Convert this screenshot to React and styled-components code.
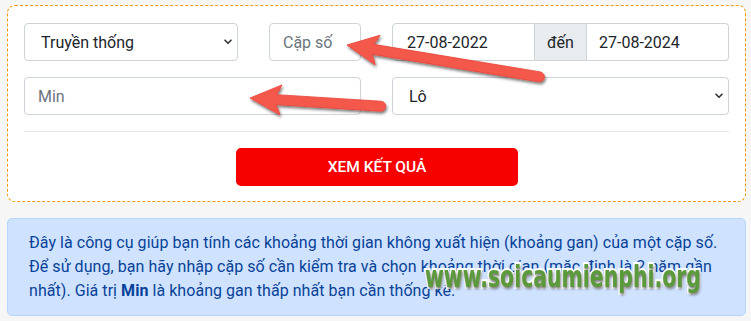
import React from "react";
import styled, { createGlobalStyle } from "styled-components";

const Global = createGlobalStyle`
  html, body { margin: 0; padding: 0; background: #f6f6f6; }
  body { font-family: Roboto, "Noto Sans", Arial, sans-serif; }
  * { box-sizing: border-box; }
`;

const Page = styled.div`
  position: relative;
  width: 751px;
  height: 321px;
  padding: 5px 5px 0 7px;
  overflow: hidden;
`;

const Card = styled.div`
  background: #fff;
  border: 1px dashed #f39800;
  border-radius: 8px;
  padding: 17px 16px 15px;
`;

const Row = styled.div`
  display: grid;
  grid-template-columns: ${(p) => p.$cols};
  column-gap: 31px;
  margin-bottom: ${(p) => p.$mb || 0}px;
`;

const fieldBase = `
  height: 38px;
  width: 100%;
  border: 1px solid #ced4da;
  background: #fff;
  font-family: Roboto, "Noto Sans", Arial, sans-serif;
  font-size: 16px;
  color: #212529;
  display: flex;
  align-items: center;
`;

const SelectBox = styled.div`
  ${fieldBase}
  position: relative;
  border-radius: 4px;
  padding: 0 16px;
`;

const Chevron = styled.svg`
  position: absolute;
  right: 5px;
  top: 15px;
  width: 8px;
  height: 6px;
`;

const Input = styled.div`
  ${fieldBase}
  border-radius: ${(p) => p.$radius || "4px"};
  padding: 0 ${(p) => p.$pad || 13}px;
  color: ${(p) => (p.$placeholder ? "#6c757d" : "#212529")};
  ${(p) => p.$noLeft && "border-left: none;"}
`;

const DateGroup = styled.div`
  display: grid;
  grid-template-columns: 143px 52px 1fr;
`;

const Addon = styled.div`
  height: 38px;
  background: #e9ecef;
  border: 1px solid #ced4da;
  border-left: none;
  display: flex;
  align-items: center;
  justify-content: center;
  font-size: 16px;
  color: #212529;
`;

const Divider = styled.div`
  height: 1px;
  background: #e4e4e4;
  margin: 16px 0 16px;
`;

const ButtonRow = styled.div`
  display: flex;
  justify-content: center;
`;

const Button = styled.button`
  width: 282px;
  height: 38px;
  background: #f70000;
  border: none;
  border-radius: 5px;
  color: #fff;
  font-family: Roboto, "Open Sans", Arial, sans-serif;
  font-weight: 500;
  font-size: 15.5px;
  margin-left: 1px;
`;

const Info = styled.div`
  position: relative;
  margin-top: 16px;
  background: #cfe2ff;
  border: 1px solid #b6d4fe;
  border-radius: 5px;
  padding: 12px 21px;
  color: #084298;
  font-size: 16px;
  line-height: 24px;
  letter-spacing: 0.05px;
`;

const Watermark = styled.span`
  position: absolute;
  left: 417px;
  top: 43px;
  font-family: "DejaVu Sans", Arial, sans-serif;
  font-weight: bold;
  font-stretch: condensed;
  font-size: 30px;
  line-height: 30px;
  letter-spacing: 0;
  color: #5a9a3a;
  -webkit-text-stroke: 4px #fff;
  paint-order: stroke fill;
  text-shadow: 1px 2px 3px rgba(0, 0, 0, 0.55);
  transform: scaleX(0.757);
  transform-origin: left top;
  white-space: nowrap;
  pointer-events: none;
`;

const Overlay = styled.svg`
  position: absolute;
  left: 0;
  top: 0;
  width: 751px;
  height: 321px;
  pointer-events: none;
`;

const Select = ({ children }) => (
  <SelectBox>
    {children}
    <Chevron viewBox="0 0 8 6">
      <path d="M1 1.2 L4 4.3 L7 1.2" fill="none" stroke="#333" strokeWidth="1.6" strokeLinecap="round" strokeLinejoin="round" />
    </Chevron>
  </SelectBox>
);

const Arrow = ({ x, y, len, angle }) => (
  <g transform={`translate(${x} ${y}) rotate(${angle})`}>
    <path
      d={`M0 0 L31 -15 Q29 -9 26 -5 L${len} -5 A5 5 0 0 1 ${len} 5 L26 5 Q29 9 31 15 Z`}
      fill="#f4584b"
      stroke="#e9463a"
      strokeWidth="0.8"
      strokeLinejoin="round"
    />
  </g>
);

export default function App() {
  return (
    <>
      <Global />
      <Page>
        <Card>
          <Row $cols="214px 92px 1fr" $mb={16}>
            <Select>Truyền thống</Select>
            <Input $placeholder>Cặp số</Input>
            <DateGroup>
              <Input $radius="4px 0 0 4px" $pad={14}>27-08-2022</Input>
              <Addon>đến</Addon>
              <Input $radius="0 4px 4px 0" $noLeft $pad={12}>27-08-2024</Input>
            </DateGroup>
          </Row>
          <Row $cols="1fr 1fr">
            <Input $placeholder>Min</Input>
            <Select>Lô</Select>
          </Row>
          <Divider />
          <ButtonRow>
            <Button>XEM KẾT QUẢ</Button>
          </ButtonRow>
        </Card>
        <Info>
          Đây là công cụ giúp bạn tính các khoảng thời gian không xuất hiện (khoảng gan) của một cặp số.
          Để sử dụng, bạn hãy nhập cặp số cần kiểm tra và chọn khoảng thời gian (mặc định là 2 năm gần
          nhất). Giá trị <b>Min</b> là khoảng gan thấp nhất bạn cần thống kê.
          <Watermark>www.soicaumienphi.org</Watermark>
        </Info>
        <Overlay viewBox="0 0 751 321">
          <defs>
            <filter id="sh" x="-20%" y="-50%" width="140%" height="200%">
              <feDropShadow dx="1" dy="2" stdDeviation="1.6" floodColor="#000" floodOpacity="0.55" />
            </filter>
          </defs>
          <g filter="url(#sh)">
            <Arrow x={347} y={45} len={195} angle={9.4} />
            <Arrow x={250} y={98} len={131} angle={3.6} />
          </g>
        </Overlay>
      </Page>
    </>
  );
}
